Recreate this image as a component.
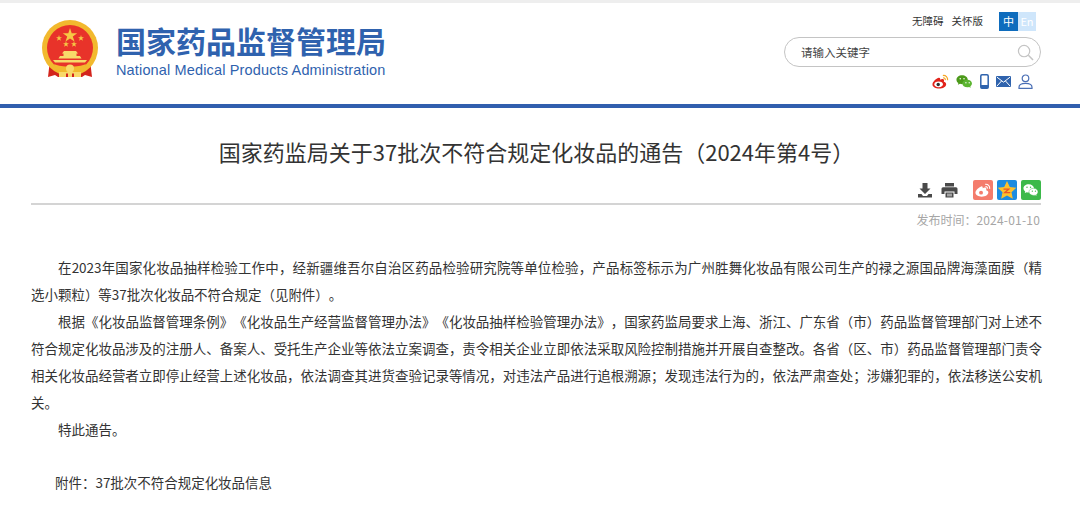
<script>
</script>

<div class="page">
  <header class="head">
    <div class="brand">
      <svg class="emblem" viewBox="0 0 60 62" width="60" height="62" aria-hidden="true">
        <path d="M10 42 L8 59 L15 57 L18 59 L42 59 L45 57 L52 59 L50 42 Z" fill="#d3241c"/>
        <circle cx="30" cy="30" r="28" fill="#f2b92e"/>
        <circle cx="30" cy="30" r="23" fill="#e8332a"/>
        <path d="M30 10l1.700 5.200h5.500l-4.400 3.200 1.700 5.200-4.500-3.200-4.500 3.200 1.700-5.200-4.400-3.200h5.500z" fill="#f6c945"/>
        <path d="M19 17l.7 2.200h2.300l-1.800 1.300.7 2.200-1.900-1.300-1.900 1.300.7-2.200-1.800-1.300h2.300zM41 17l.7 2.200h2.300l-1.800 1.300.7 2.200-1.900-1.300-1.900 1.300.7-2.200-1.800-1.300h2.300zM26 23l.7 2.200h2.300l-1.800 1.300.7 2.200-1.900-1.300-1.900 1.300.7-2.200-1.800-1.300h2.300zM34 23l.7 2.200h2.300l-1.800 1.300.7 2.200-1.900-1.300-1.900 1.300.7-2.200-1.800-1.300h2.300z" fill="#f6c945"/>
        <path d="M24 33h12l2 2.500h-1.500V38h3.500l1.500 2.500H18.500L20 38h3.500v-2.500H22zM13 42h34l-2 2.500H15z" fill="#f8d96a"/>
        <path d="M14 46c5 2 9 2.500 16 2.500s11-.5 16-2.500l-3 6c-4 1.500-8 2-13 2s-9-.5-13-2z" fill="#f2b92e"/>
        <path d="M19 54h22v5H19z" fill="#f8d96a"/>
        <circle cx="30" cy="50.500" r="4" fill="#f8d96a"/>
        <path d="M26 55.500h2v3.500h-2zM32 55.500h2v3.500h-2z" fill="#d3241c"/>
      </svg>
      <div class="names">
        <div class="cn">国家药品监督管理局</div>
        <div class="en">National Medical Products Administration</div>
      </div>
    </div>
    <div class="tools">
      <div class="links">
        <span>无障碍</span><span>关怀版</span>
        <div class="lang"><b>中</b><i>En</i></div>
      </div>
      <div class="search">
        <span>请输入关键字</span>
        <svg viewBox="0 0 18 18" width="17" height="17" aria-hidden="true"><circle cx="7.500" cy="7.500" r="6" fill="none" stroke="#c4c4c4" stroke-width="1.300"/><path d="M12 12l5 5" stroke="#c4c4c4" stroke-width="1.600"/></svg>
      </div>
      <div class="social">
        <svg viewBox="0 0 18 15" width="17" height="15" aria-hidden="true">
          <path d="M7 3.500C3.500 5 .5 8 .5 10.700.5 13.300 4 15 7.500 15c4.300 0 7.500-2.300 7.500-4.700 0-1.500-1.300-2.200-2.500-2.500.7-1.700.2-2.800-1-3-1-.1-2.100.3-2.900.8.400-1.500-.4-2.500-1.600-2.100z" fill="#e2231a"/>
          <ellipse cx="7" cy="10.500" rx="4.500" ry="3" fill="#fff"/><circle cx="6.600" cy="10.700" r="1.800" fill="#333"/>
          <path d="M11.500 1.200c3-.5 5.500 2 5 5M11.800 3.700c1.400-.2 2.500.9 2.300 2.300" fill="none" stroke="#f5a623" stroke-width="1.300"/>
        </svg>
        <svg viewBox="0 0 18 15" width="17" height="15" aria-hidden="true">
          <path d="M6.500 1C3 1 .5 3 .5 5.600c0 1.500.8 2.700 2 3.500L2 11l2.200-1c.8.200 1.500.3 2.300.3 0 0 5.500-1.800 6-4.800C12.200 3 9.500 1 6.500 1z" fill="#4c9a1a"/>
          <path d="M12 5.600c-3 0-5.300 1.800-5.300 4s2.300 4 5.300 4c.6 0 1.200-.1 1.800-.3l1.800.9-.4-1.600c1-.7 1.700-1.800 1.700-3 0-2.200-2.300-4-4.900-4z" fill="#5cb531"/>
          <circle cx="4.500" cy="4.500" r=".8" fill="#fff"/><circle cx="8.500" cy="4.500" r=".8" fill="#fff"/><circle cx="10.500" cy="8.800" r=".7" fill="#fff"/><circle cx="14" cy="8.800" r=".7" fill="#fff"/>
        </svg>
        <svg viewBox="0 0 9 15" width="9" height="15" aria-hidden="true"><rect x=".8" y=".8" width="7.400" height="13.400" rx="1.200" fill="#fff" stroke="#2f63ad" stroke-width="1.500"/><rect x=".8" y="11" width="7.400" height="3.200" fill="#2f63ad"/></svg>
        <svg viewBox="0 0 15 11" width="15" height="11" aria-hidden="true"><rect width="15" height="11" rx="1" fill="#2f63ad"/><path d="M1 1.200l6.500 5 6.500-5M1 10l4.500-5M14 10L9.500 5" fill="none" stroke="#fff" stroke-width="1"/></svg>
        <svg viewBox="0 0 15 15" width="15" height="15" aria-hidden="true"><circle cx="7.500" cy="4.300" r="3.300" fill="none" stroke="#4a6fb5" stroke-width="1.200"/><path d="M1 14.400v-1.200C1 10.500 3.500 9.300 7.500 9.300s6.500 1.200 6.500 3.900v1.200z" fill="none" stroke="#4a6fb5" stroke-width="1.200"/></svg>
      </div>
    </div>
  </header>

  <main class="article">
    <h1>国家药监局关于37批次不符合规定化妆品的通告（2024年第4号）</h1>
    <div class="actions">
      <svg viewBox="0 0 16 16" width="16" height="16" aria-hidden="true"><path d="M5.500 1h5v5.500h3L8 12 2.500 6.500h3zM1 12h3.500L6 14h4l1.500-2H15v3.500H1z" fill="#4a4a4a"/></svg>
      <svg viewBox="0 0 17 16" width="17" height="16" aria-hidden="true"><path d="M4 1h9v3.500H4zM2 5.200h13a1.500 1.500 0 0 1 1.500 1.500v5.300H13.500V9.500h-10V12H.5V6.700A1.500 1.500 0 0 1 2 5.200zM4.500 10.500h8V15.500h-8z" fill="#4a4a4a"/><path d="M6 12.200h5M6 13.800h5" stroke="#fff" stroke-width=".7"/></svg>
      <div class="shares">
        <span class="sq weibo"><svg viewBox="0 0 18 15" width="16" height="14" aria-hidden="true"><path d="M7 3.500C3.500 5 .5 8 .5 10.700.5 13.300 4 15 7.500 15c4.300 0 7.500-2.300 7.500-4.700 0-1.500-1.300-2.200-2.500-2.500.7-1.700.2-2.800-1-3-1-.1-2.100.3-2.900.8.400-1.500-.4-2.500-1.600-2.100z" fill="#fff"/><circle cx="6.800" cy="10.500" r="2.200" fill="#f47c6c"/><path d="M11.500 1.200c3-.5 5.500 2 5 5M11.800 3.700c1.400-.2 2.500.9 2.300 2.300" fill="none" stroke="#fff" stroke-width="1.200"/></svg></span>
        <span class="sq qzone"><svg viewBox="0 0 20 20" width="20" height="20" aria-hidden="true"><path d="M10 1l2.800 6 6.500.8-4.800 4.400 1.300 6.500L10 15.500l-5.800 3.200 1.300-6.500L.7 7.800 7.200 7z" fill="#fbc02d"/><path d="M6.500 8.500h7l-4 3.500h4l-.5 1.200H6l4-3.500H6.500z" fill="#e8562a"/></svg></span>
        <span class="sq wechat"><svg viewBox="0 0 18 15" width="16" height="14" aria-hidden="true"><path d="M6.500 1C3 1 .5 3 .5 5.600c0 1.500.8 2.700 2 3.500L2 11l2.200-1c.8.200 1.500.3 2.300.3 0 0 5.500-1.800 6-4.800C12.200 3 9.500 1 6.500 1z" fill="#fff"/><path d="M12 5.600c-3 0-5.300 1.800-5.300 4s2.300 4 5.300 4c.6 0 1.200-.1 1.800-.3l1.800.9-.4-1.600c1-.7 1.700-1.800 1.700-3 0-2.200-2.300-4-4.900-4z" fill="#fff" stroke="#3cb94a" stroke-width=".5"/><circle cx="4.500" cy="4.500" r=".8" fill="#3cb94a"/><circle cx="8.500" cy="4.500" r=".8" fill="#3cb94a"/><circle cx="10.500" cy="8.800" r=".7" fill="#3cb94a"/><circle cx="14" cy="8.800" r=".7" fill="#3cb94a"/></svg></span>
      </div>
    </div>
    <div class="date">发布时间：<span>2024-01-10</span></div>
    <div class="body">
      <p>在2023年国家化妆品抽样检验工作中，经新疆维吾尔自治区药品检验研究院等单位检验，产品标签标示为广州胜舞化妆品有限公司生产的禄之源国品牌海藻面膜（精选小颗粒）等37批次化妆品不符合规定（见附件）。</p>
      <p>根据《化妆品监督管理条例》《化妆品生产经营监督管理办法》《化妆品抽样检验管理办法》，国家药监局要求上海、浙江、广东省（市）药品监督管理部门对上述不符合规定化妆品涉及的注册人、备案人、受托生产企业等依法立案调查，责令相关企业立即依法采取风险控制措施并开展自查整改。各省（区、市）药品监督管理部门责令相关化妆品经营者立即停止经营上述化妆品，依法调查其进货查验记录等情况，对违法产品进行追根溯源；发现违法行为的，依法严肃查处；涉嫌犯罪的，依法移送公安机关。</p>
      <p>特此通告。</p>
      <p class="attach">附件：37批次不符合规定化妆品信息</p>
    </div>
  </main>
</div>

<style>
  :global(body) { margin: 0; background: #fff; }
  .page { width: 1080px; height: 508px; overflow: hidden; font-family: "Noto Sans CJK SC", "Liberation Sans", sans-serif; border-top: 3px solid #eeeeee; box-sizing: border-box; text-spacing-trim: space-all; }
  .head { display: flex; justify-content: space-between; box-sizing: border-box; padding: 0 39px 0 40px; border-bottom: 4px solid #315fae; height: 105px; }
  .brand { display: flex; gap: 16px; padding-top: 15px; }
  .emblem { display: block; }
  .names { padding-top: 3px; }
  .cn { font-size: 30px; line-height: 38px; font-weight: 700; color: #2f62ae; white-space: nowrap; }
  .en { font-family: "Liberation Sans", sans-serif; font-size: 14.500px; line-height: 18px; margin-top: 2px; color: #2f62ae; white-space: nowrap; letter-spacing: .15px; }
  .tools { width: 257px; display: flex; flex-direction: column; align-items: stretch; padding-top: 9px; }
  .links { display: flex; justify-content: flex-end; align-items: flex-start; gap: 8px; font-size: 10.500px; line-height: 18px; color: #333; height: 19px; padding-right: 5px; }
  .lang { display: flex; margin-left: 8px; font-size: 11px; }
  .lang b { width: 19px; height: 19px; background: #0e6cbd; color: #fff; font-weight: 400; text-align: center; line-height: 19px; }
  .lang i { width: 18px; height: 19px; background: #cfe6fb; color: #fff; font-style: normal; text-align: center; line-height: 19px; }
  .search { height: 28px; margin-top: 6px; border: 1px solid #c4c4c4; border-radius: 16px; display: flex; align-items: center; justify-content: space-between; padding: 0 6px 0 16px; font-size: 11.500px; color: #444; }
  .social { display: flex; justify-content: flex-end; align-items: center; gap: 7px; padding: 3px 8px 0 0; height: 22px; }
  .article { padding: 0 38px 0 31px; }
  h1 { margin: 27px 0 0; font-size: 22px; line-height: 32px; font-weight: 400; color: #333; text-align: center; white-space: nowrap; }
  .actions { display: flex; align-items: center; justify-content: flex-end; gap: 8px; margin: 13px 1px 0 0; height: 20px; padding: 0 0 3px; border-bottom: 2px solid #d4d4d4; }
  .shares { display: flex; gap: 4px; margin-left: 7px; }
  .sq { width: 20px; height: 20px; border-radius: 2px; display: flex; align-items: center; justify-content: center; }
  .weibo { background: #f47c6c; }
  .qzone { background: #1c8be0; }
  .wechat { background: #3cb94a; }
  .date { text-align: right; font-size: 12px; line-height: 16px; margin: 7px 2px 0 0; color: #a6a6a6; }
  .date span { letter-spacing: .2px; }
  .body { margin-top: 26px; font-size: 13.480px; line-height: 27px; color: #333; text-align: justify; }
  p { margin: 0; text-indent: 27px; }
  .attach { margin-top: 26px; text-indent: 24px; }
</style>
